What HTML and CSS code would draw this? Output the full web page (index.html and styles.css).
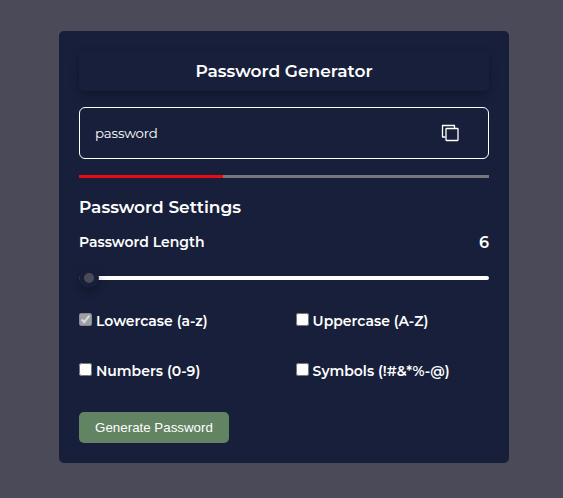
FILE: index.html
```html
<!DOCTYPE html>
<html lang="en">
<head>
<meta charset="utf-8">
<title>Password Generator</title>
<link rel="stylesheet" href="styles.css">
</head>
<body>
<main class="card">
  <h1 class="title">Password Generator</h1>
  <div class="output">
    <span class="password">password</span>
    <svg class="copy" viewBox="0 0 18 18" width="18" height="18" fill="none" stroke="#fff" stroke-width="1.3" stroke-linejoin="round">
      <path d="M4.5 13H1.5V1.5H13.5V4.5"/>
      <rect x="5" y="4.5" width="12" height="12" rx=".5"/>
    </svg>
  </div>
  <div class="strength"><div class="level"></div></div>
  <h2 class="settings">Password Settings</h2>
  <div class="length"><span>Password Length</span><span class="count">6</span></div>
  <input class="slider" type="range" min="6" max="30" value="6" aria-label="Password Length">
  <div class="options">
    <label><input type="checkbox" checked disabled><span>Lowercase (a-z)</span></label>
    <label><input type="checkbox"><span>Uppercase (A-Z)</span></label>
    <label><input type="checkbox"><span>Numbers (0-9)</span></label>
    <label><input type="checkbox"><span>Symbols (!#&amp;*%-@)</span></label>
  </div>
  <button class="generate">Generate Password</button>
</main>
</body>
</html>
```
FILE: styles.css
```css
* { margin: 0; padding: 0; box-sizing: border-box; }
body {
  height: 498px;
  padding: 31px 0 0 59px;
  overflow: hidden;
  background: #4b4a59;
  color: #fff;
  font-family: Montserrat, Inter, sans-serif;
}
.card {
  width: 450px;
  height: 432px;
  padding: 20px;
  border-radius: 5px;
  background: #181f3b;
}
.title {
  height: 40px;
  line-height: 40px;
  text-align: center;
  font-size: 17px;
  font-weight: 600;
  border-radius: 5px;
  box-shadow: 0 4px 10px rgba(0, 0, 0, .3);
}
.output {
  display: flex;
  align-items: center;
  justify-content: space-between;
  height: 52px;
  margin-top: 16px;
  padding: 0 29.5px 0 15px;
  border: 1px solid #fff;
  border-radius: 6px;
}
.password { font-size: 13.33px; letter-spacing: -.15px; }
.strength { height: 3px; margin-top: 16px; background: #77767a; }
.level { width: 35%; height: 3px; background: #e90b0f; }
.settings { margin-top: 18px; line-height: 22px; font-size: 17px; font-weight: 600; }
.length {
  display: flex;
  justify-content: space-between;
  align-items: center;
  height: 20px;
  margin-top: 14px;
  font-size: 14px;
  font-weight: 600;
}
.count { font-size: 16px; }
.slider {
  display: block;
  appearance: none;
  width: 100%;
  height: 4px;
  margin-top: 24px;
  border-radius: 2px;
  background: #fff;
}
.slider::-webkit-slider-thumb {
  appearance: none;
  width: 20px;
  height: 20px;
  border: 5px solid #181f3b;
  border-radius: 50%;
  background: #4b4a59;
  box-shadow: 0 4px 10px rgba(0, 0, 0, .3);
}
.options {
  display: grid;
  grid-template-columns: 216.6px 1fr;
  row-gap: 30px;
  margin-top: 31px;
}
.options label {
  display: flex;
  align-items: flex-start;
  gap: 4px;
  height: 20px;
  line-height: 20px;
  font-size: 14px;
  font-weight: 600;
  white-space: nowrap;
}
.options input { width: 13px; height: 13px; margin-top: 2px; }
.generate {
  display: block;
  width: 150px;
  height: 31px;
  margin-top: 31px;
  border: 0;
  border-radius: 5px;
  background: #638463;
  color: #fff;
  font: 13.33px "Liberation Sans", sans-serif;
}
```
